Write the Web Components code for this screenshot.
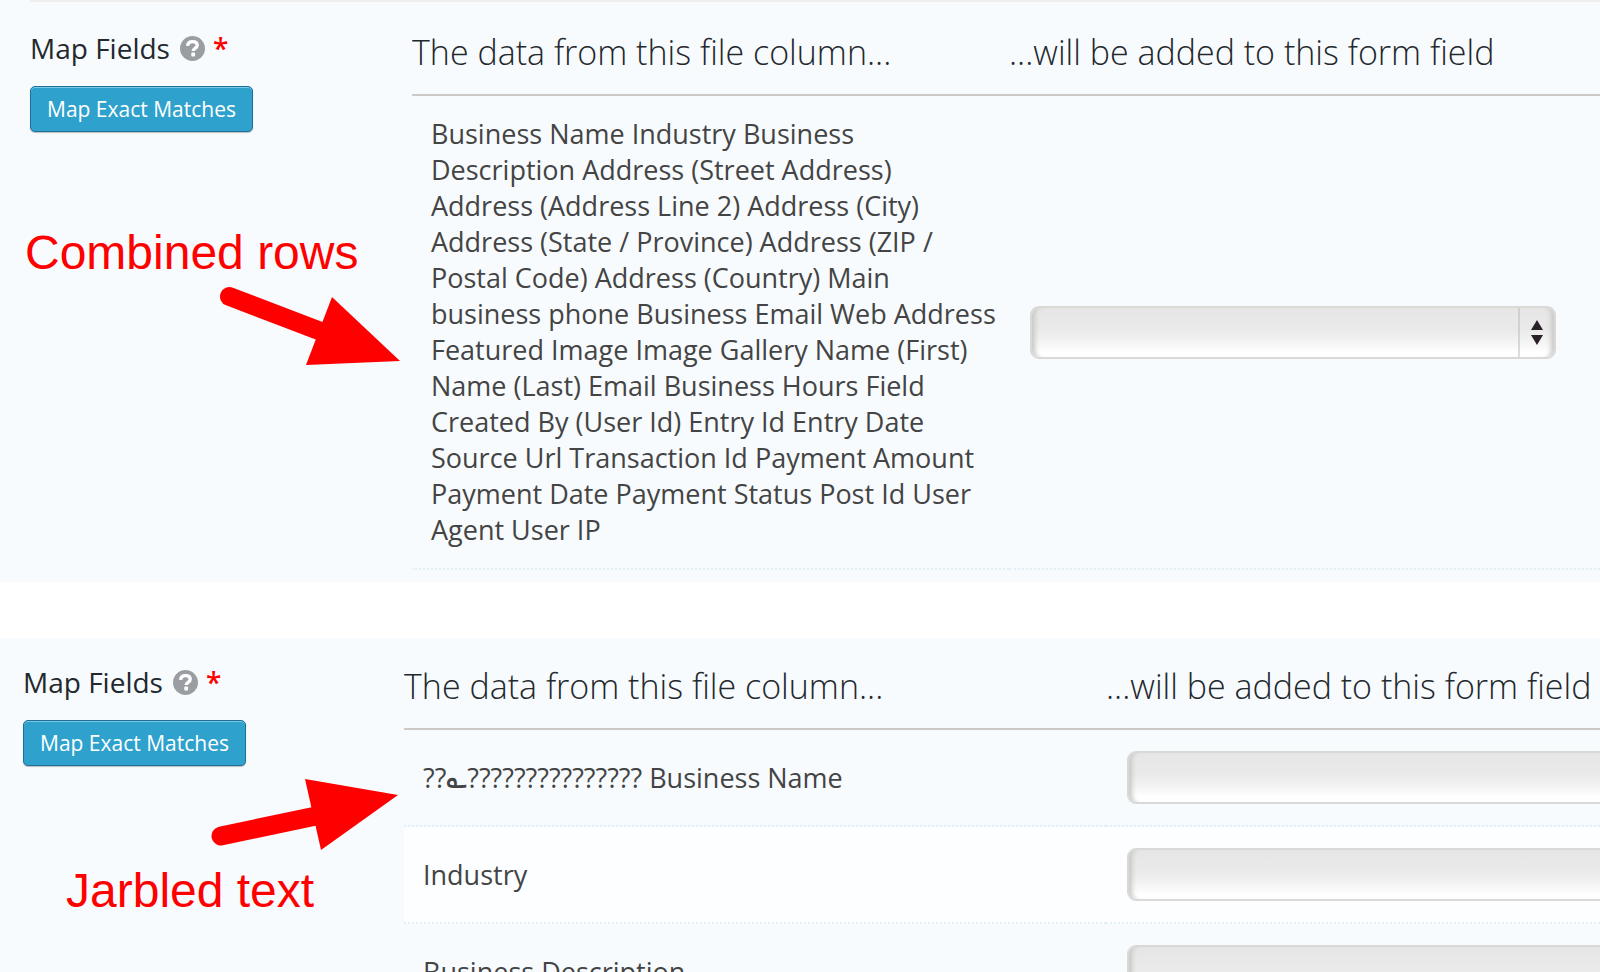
<!DOCTYPE html>
<html lang="en">
<head>
<meta charset="utf-8">
<title>Map Fields</title>
<style>
  body {
    margin: 0;
    height: 100vh;
    overflow: hidden;
    background: #ffffff;
    color: #23282d;
    font-family: "Open Sans", "Noto Sans", sans-serif;
  }

  main {
    display: flex;
    flex-direction: column;
    gap: 56px;
  }

  import-panel.combined {
    --panel-inset: 30px;
    --panel-top: 26px;
    --side-width: 382px;
    --column-width: 597px;
  }

  import-panel.garbled {
    --panel-inset: 23px;
    --panel-top: 24px;
    --side-width: 381px;
    --column-width: 702px;
  }

  import-panel.combined callout-note {
    margin-top: 93px;
  }

  import-panel.garbled callout-note {
    margin-top: 11px;
  }
</style>
</head>
<body>
<main>
  <import-panel class="combined" ruled>
    <field-heading slot="side">Map Fields</field-heading>
    <callout-note slot="side" arrow="down">Combined rows</callout-note>
    <field-map>
      <map-column>Business Name Industry Business Description Address (Street Address) Address (Address Line 2) Address (City) Address (State / Province) Address (ZIP / Postal Code) Address (Country) Main business phone Business Email Web Address Featured Image Image Gallery Name (First) Name (Last) Email Business Hours Field Created By (User Id) Entry Id Entry Date Source Url Transaction Id Payment Amount Payment Date Payment Status Post Id User Agent User IP</map-column>
    </field-map>
  </import-panel>
  <import-panel class="garbled">
    <field-heading slot="side">Map Fields</field-heading>
    <callout-note slot="side" arrow="up">Jarbled text</callout-note>
    <field-map>
      <map-column>??<span class="sign">&#x60E;</span>??????????????? Business Name</map-column>
      <map-column>Industry</map-column>
      <map-column>Business Description</map-column>
    </field-map>
  </import-panel>
</main>

<script>
class ImportPanel extends HTMLElement {
  constructor() {
    super();
    this.attachShadow({ mode: 'open' });
    this.shadowRoot.innerHTML = `
      <style>
        :host {
          display: block;
          background: #f7fbfe;
        }

        .rule {
          display: none;
          height: 2px;
          margin-left: 30px;
          background: #eeeeee;
        }

        :host([ruled]) .rule {
          display: block;
        }

        .panel {
          display: grid;
          grid-template-columns: var(--side-width) minmax(0, 1fr);
          padding: var(--panel-top) 0 12px var(--panel-inset);
        }

        .side {
          display: flex;
          flex-direction: column;
        }
      </style>
      <div class="rule"></div>
      <section class="panel">
        <div class="side"><slot name="side"></slot></div>
        <slot></slot>
      </section>
    `;
  }
}
customElements.define('import-panel', ImportPanel);

class FieldHeading extends HTMLElement {
  constructor() {
    super();
    this.attachShadow({ mode: 'open' });
    this.shadowRoot.innerHTML = `
      <style>
        :host {
          display: flex;
          flex-direction: column;
          align-items: flex-start;
          gap: 18px;
        }

        .title {
          display: flex;
          align-items: center;
          gap: 8px;
          margin: 0;
          font-size: 28px;
          line-height: 40px;
          font-weight: 400;
        }

        .help {
          width: 25px;
          height: 25px;
          margin-left: 2px;
        }

        .required {
          color: #ff0000;
          font-weight: 600;
        }

        button {
          box-sizing: border-box;
          height: 46px;
          padding: 0 16px 1px;
          border: 1px solid #1f6f9b;
          border-radius: 5px;
          background: #2ea2cc;
          box-shadow: inset 0 1px 0 #78c8e6, 0 1px 1px rgba(0, 0, 0, 0.25);
          color: #ffffff;
          font-family: inherit;
          font-size: 21px;
          line-height: 42px;
          cursor: pointer;
        }
      </style>
      <h2 class="title">
        <slot></slot>
        <svg class="help" viewBox="0 0 25 25" aria-hidden="true">
          <circle cx="12.5" cy="12.5" r="12.5" fill="#9a9ea2"/>
          <path d="M7.600 9.800C7.800 6.800 9.800 5.600 12.500 5.600c2.900 0 4.700 1.400 4.700 3.700 0 3.100-4 3-4 5.700" fill="none" stroke="#ffffff" stroke-width="3.400"/>
          <rect x="11.300" y="16.600" width="3.800" height="3.800" rx="1" fill="#ffffff"/>
        </svg>
        <span class="required">*</span>
      </h2>
      <button type="button">Map Exact Matches</button>
    `;
  }
}
customElements.define('field-heading', FieldHeading);

const ARROWS = {
  down: `
    <svg width="184" height="82" viewBox="0 0 184 82" aria-hidden="true">
      <path d="M12.500 12.500L108 49" stroke="#ff0000" stroke-width="19" stroke-linecap="round"/>
      <path d="M183 77L115 13L89 81z" fill="#ff0000"/>
    </svg>`,
  up: `
    <svg width="188" height="74" viewBox="0 0 188 74" aria-hidden="true">
      <path d="M11 59L106 39" stroke="#ff0000" stroke-width="19" stroke-linecap="round"/>
      <path d="M188 18L95 2L111 73z" fill="#ff0000"/>
    </svg>`
};

class CalloutNote extends HTMLElement {
  constructor() {
    super();
    this.attachShadow({ mode: 'open' });
  }

  connectedCallback() {
    this.shadowRoot.innerHTML = `
      <style>
        :host {
          display: flex;
          flex-direction: column;
          gap: 3px;
          color: #ff0000;
          font-family: "Liberation Sans", Arial, sans-serif;
          font-size: 48px;
          line-height: 56px;
        }

        :host([arrow="up"]) {
          flex-direction: column-reverse;
          gap: 12px;
        }

        svg {
          display: block;
          margin-left: 187px;
          fill: none;
        }

        :host([arrow="down"]) .text {
          margin-left: -5px;
        }

        :host([arrow="up"]) .text {
          margin-left: 43px;
        }
      </style>
      <span class="text"><slot></slot></span>
      ${ARROWS[this.getAttribute('arrow')]}
    `;
  }
}
customElements.define('callout-note', CalloutNote);

// Table of file columns, one row for each <map-column> child
class FieldMap extends HTMLElement {
  constructor() {
    super();
    this.attachShadow({ mode: 'open' });
    this.shadowRoot.innerHTML = `
      <style>
        :host {
          display: block;
          min-width: 0;
          overflow: hidden;
        }

        table {
          width: 100%;
          table-layout: fixed;
          border-collapse: separate;
          border-spacing: 0;
        }

        .source {
          width: var(--column-width);
        }

        th {
          padding: 0 0 18px;
          border-bottom: 2px solid #cfc9c6;
          font-size: 34px;
          line-height: 48px;
          font-weight: 300;
          text-align: left;
          white-space: nowrap;
        }

        td {
          padding: 20px 10px 20px 19px;
          border-bottom: 2px dotted #e2f0f5;
          color: #444444;
          font-size: 27px;
          line-height: 36px;
          vertical-align: middle;
        }

        td.target {
          padding: 21px 0 21px 21px;
        }

        .sign {
          font-size: 36px;
          line-height: 0;
        }

        tbody tr:nth-child(even) {
          background: #fdfeff;
        }

        .picker {
          display: grid;
          width: 526px;
        }

        .picker > * {
          grid-area: 1 / 1;
        }

        select {
          appearance: none;
          box-sizing: border-box;
          width: 100%;
          height: 53px;
          margin: 0;
          padding: 0 44px 0 12px;
          border: 2px solid #d9d9d7;
          border-radius: 9px;
          background: linear-gradient(#e6e6e6, #eaeaea 45%, #f3f3f3 68%, #ffffff 90%);
          box-shadow: inset 7px 0 5px -4px #c8c8c6, inset -7px 0 5px -4px #c8c8c6;
          font-family: inherit;
          font-size: 27px;
        }

        .stepper {
          justify-self: end;
          align-self: center;
          width: 38px;
          height: 49px;
          pointer-events: none;
        }
      </style>
      <table>
        <colgroup><col class="source"><col></colgroup>
        <thead>
          <tr>
            <th scope="col">The data from this file column...</th>
            <th scope="col">...will be added to this form field</th>
          </tr>
        </thead>
        <tbody></tbody>
      </table>
    `;
  }

  connectedCallback() {
    const tbody = this.shadowRoot.querySelector('tbody');
    tbody.innerHTML = '';
    this.querySelectorAll('map-column').forEach((column, i) => {
      const row = document.createElement('tr');
      row.innerHTML = `
        <td><label for="field-${i}">${column.innerHTML.trim()}</label></td>
        <td class="target">
          <div class="picker">
            <select id="field-${i}"><option value=""></option></select>
            <svg class="stepper" viewBox="0 0 38 49" aria-hidden="true">
              <path d="M1 0V49" stroke="#bdb9b6" stroke-width="1"/>
              <path d="M19 12L25 22H13zM19 37L25 27H13z" fill="#2b2228"/>
            </svg>
          </div>
        </td>
      `;
      tbody.appendChild(row);
    });
  }
}
customElements.define('field-map', FieldMap);
</script>
</body>
</html>
